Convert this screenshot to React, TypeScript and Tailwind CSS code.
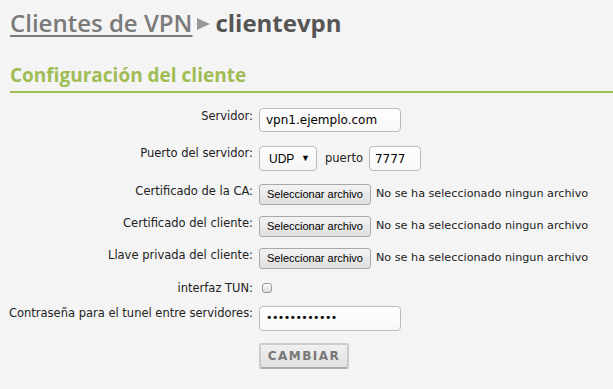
import React from "react"

const Label = ({ children, pt = "pt-0" }: { children: React.ReactNode; pt?: string }) => (
  <div className={`w-[253px] shrink-0 text-right text-[11.5px] leading-[14px] ${pt}`}>{children}</div>
)

const FileButton = () => (
  <div className="flex items-center">
    <button className="h-[21px] w-[112px] rounded-[3px] border border-[#a9a9a9] bg-gradient-to-b from-[#f4f4f4] to-[#dedede] text-[11px] text-black [font-family:'Liberation_Sans',Arial,sans-serif]">
      Seleccionar archivo
    </button>
    <span className="ml-[5px] text-[11.2px]">No se ha seleccionado ningun archivo</span>
  </div>
)

export default function App() {
  return (
    <div className="min-h-[389px] w-[613px] bg-[#f4f4f4] text-[11px] text-[#222] [font-family:'DejaVu_Sans',Verdana,sans-serif]">
      <div className="pl-[10px] pt-[7px]">
        <h1 className="flex h-[31px] items-center text-[24px] leading-[31px] [font-family:'Open_Sans',sans-serif]">
          <a className="font-semibold text-[#7a7a7a] underline decoration-[2px] underline-offset-[3px]">Clientes de VPN</a>
          <svg width="15" height="14" viewBox="0 0 15 14" className="mx-[4px] mt-[3px]">
            <polygon points="1,1 14,7 1,13" fill="#999" />
          </svg>
          <span className="font-bold text-[#555]">clientevpn</span>
        </h1>
      </div>

      <div className="ml-[10px] mt-[24px] border-b-[2px] border-[#a0bd55] pb-[3px]">
        <h2 className="text-[19px] font-bold leading-[26px] text-[#a0bd55] [font-family:'Open_Sans',sans-serif]">Configuración del cliente</h2>
      </div>

      <div className="flex flex-col pt-[15px]">
        <div className="flex gap-[6px]">
          <Label pt="pt-[1px]">Servidor:</Label>
          <div className="flex h-[24px] w-[142px] items-center rounded-[4px] border border-[#bbb] bg-gradient-to-b from-white to-[#f8f8f8] px-[6px] text-[12px] text-black">
            vpn1.ejemplo.com
          </div>
        </div>

        <div className="mt-[14px] flex gap-[6px]">
          <Label>Puerto del servidor:</Label>
          <div className="flex items-center">
            <div className="flex h-[25px] w-[58px] items-center justify-between rounded-[4px] border border-[#bbb] bg-gradient-to-b from-white to-[#f4f4f4] pl-[9px] pr-[6px] text-[12px] text-black [font-family:'Liberation_Sans',Arial,sans-serif]">
              <span>UDP</span>
              <span className="text-[9px]">▼</span>
            </div>
            <span className="ml-[8px] text-[11.5px]">puerto</span>
            <div className="ml-[6px] flex h-[25px] w-[52px] items-center rounded-[4px] border border-[#bbb] bg-gradient-to-b from-white to-[#f8f8f8] px-[5px] text-[12px] text-black">
              7777
            </div>
          </div>
        </div>

        <div className="mt-[13px] flex gap-[6px]">
          <Label>Certificado de la CA:</Label>
          <FileButton />
        </div>

        <div className="mt-[11px] flex gap-[6px]">
          <Label>Certificado del cliente:</Label>
          <FileButton />
        </div>

        <div className="mt-[11px] flex gap-[6px]">
          <Label>Llave privada del cliente:</Label>
          <FileButton />
        </div>

        <div className="mt-[11px] flex gap-[6px]">
          <Label pt="pt-[1px]">interfaz TUN:</Label>
          <div className="ml-[3px] mt-[3px] h-[10px] w-[10px] rounded-[3px] border border-[#9a9a9a] bg-gradient-to-b from-[#fafafa] to-[#ddd]" />
        </div>

        <div className="mt-[11px] flex gap-[6px]">
          <Label>Contraseña para el tunel entre servidores:</Label>
          <div className="flex h-[25px] w-[142px] items-center rounded-[4px] border border-[#bbb] bg-gradient-to-b from-white to-[#f8f8f8] px-[6px] text-[11px] tracking-[-0.6px] text-black">
            ••••••••••••
          </div>
        </div>

        <div className="mt-[12px] flex gap-[6px]">
          <div className="w-[253px] shrink-0" />
          <button className="h-[26px] w-[90px] rounded-[3px] border-[2px] border-[#ccc] border-b-[#aaa] bg-gradient-to-b from-[#f0f0f0] to-[#e2e2e2] text-[12px] font-bold tracking-[1.5px] text-[#777]">
            CAMBIAR
          </button>
        </div>
      </div>
    </div>
  )
}
